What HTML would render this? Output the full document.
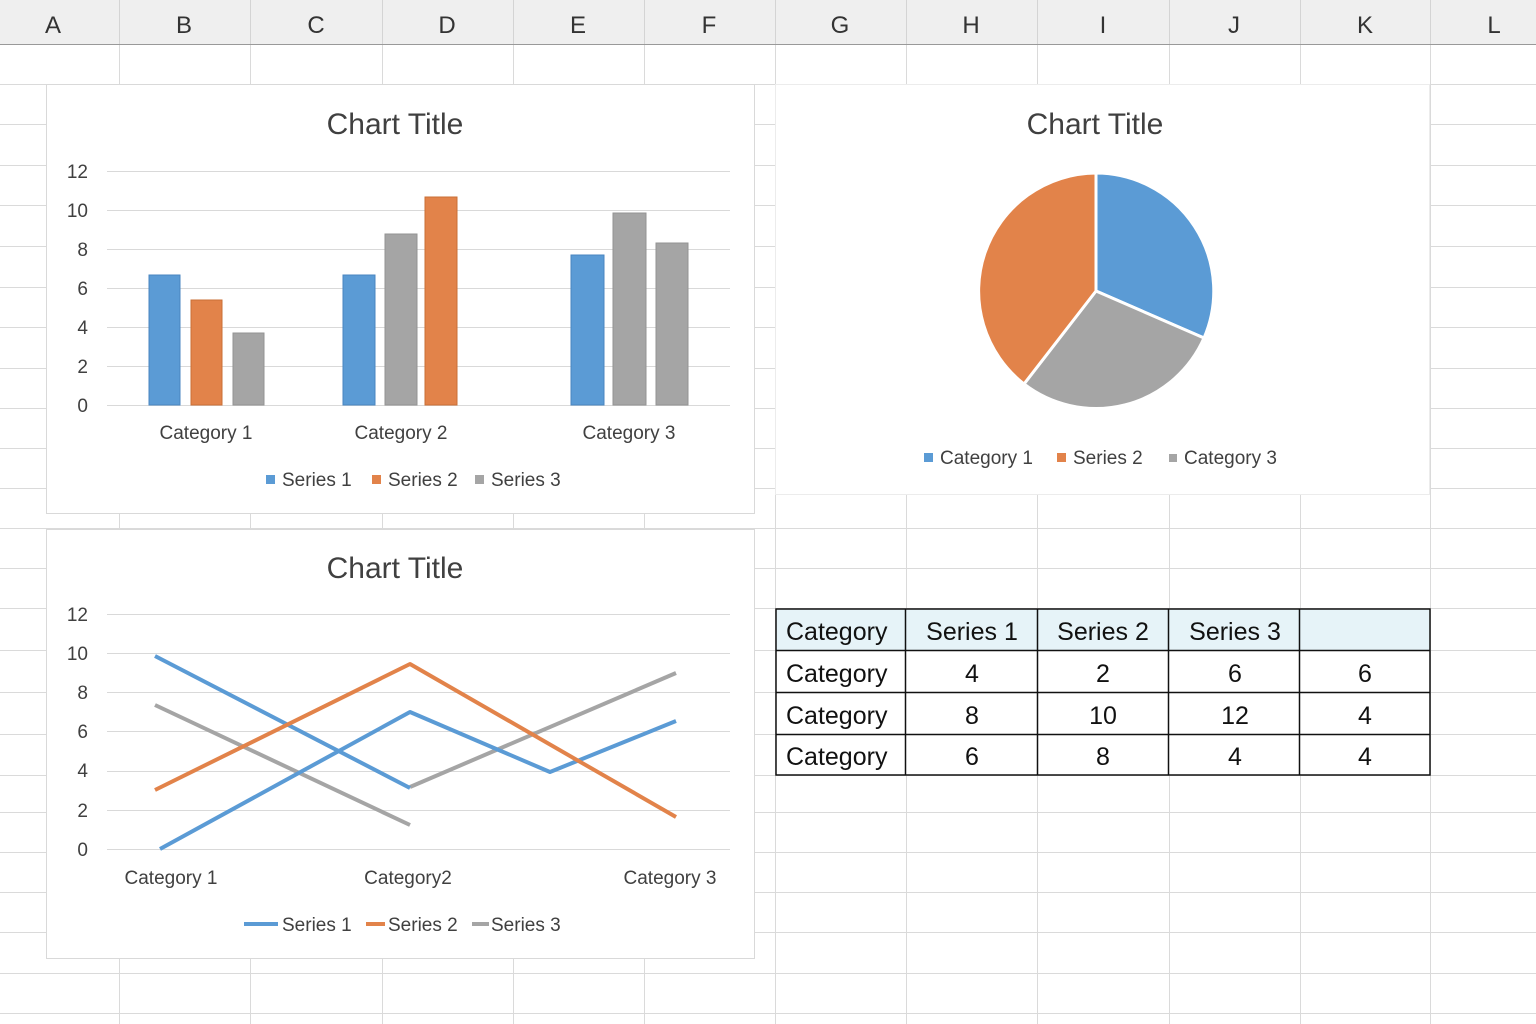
<!DOCTYPE html>
<html><head><meta charset="utf-8"><style>
html,body{margin:0;padding:0;background:#fff}
svg{display:block}
text{font-family:"Liberation Sans",sans-serif}
</style></head><body>
<svg width="1536" height="1024" viewBox="0 0 1536 1024" xmlns="http://www.w3.org/2000/svg">
<rect width="1536" height="1024" fill="#fff"/>
<g stroke="#dadada" stroke-width="1">
<line x1="0" y1="84.5" x2="1536" y2="84.5"/><line x1="0" y1="124.5" x2="1536" y2="124.5"/><line x1="0" y1="165.5" x2="1536" y2="165.5"/><line x1="0" y1="205.5" x2="1536" y2="205.5"/><line x1="0" y1="246.5" x2="1536" y2="246.5"/><line x1="0" y1="287.5" x2="1536" y2="287.5"/><line x1="0" y1="327.5" x2="1536" y2="327.5"/><line x1="0" y1="368.5" x2="1536" y2="368.5"/><line x1="0" y1="408.5" x2="1536" y2="408.5"/><line x1="0" y1="448.5" x2="1536" y2="448.5"/><line x1="0" y1="488.5" x2="1536" y2="488.5"/><line x1="0" y1="528.5" x2="1536" y2="528.5"/><line x1="0" y1="568.5" x2="1536" y2="568.5"/><line x1="0" y1="608.5" x2="1536" y2="608.5"/><line x1="0" y1="650.5" x2="1536" y2="650.5"/><line x1="0" y1="692.5" x2="1536" y2="692.5"/><line x1="0" y1="734.5" x2="1536" y2="734.5"/><line x1="0" y1="775.5" x2="1536" y2="775.5"/><line x1="0" y1="812.5" x2="1536" y2="812.5"/><line x1="0" y1="852.5" x2="1536" y2="852.5"/><line x1="0" y1="892.5" x2="1536" y2="892.5"/><line x1="0" y1="932.5" x2="1536" y2="932.5"/><line x1="0" y1="973.5" x2="1536" y2="973.5"/><line x1="0" y1="1013.5" x2="1536" y2="1013.5"/>
<line x1="119.5" y1="0" x2="119.5" y2="1024"/><line x1="250.5" y1="0" x2="250.5" y2="1024"/><line x1="382.5" y1="0" x2="382.5" y2="1024"/><line x1="513.5" y1="0" x2="513.5" y2="1024"/><line x1="644.5" y1="0" x2="644.5" y2="1024"/><line x1="775.5" y1="0" x2="775.5" y2="1024"/><line x1="906.5" y1="0" x2="906.5" y2="1024"/><line x1="1037.5" y1="0" x2="1037.5" y2="1024"/><line x1="1169.5" y1="0" x2="1169.5" y2="1024"/><line x1="1300.5" y1="0" x2="1300.5" y2="1024"/><line x1="1430.5" y1="0" x2="1430.5" y2="1024"/>
</g>
<rect x="0" y="0" width="1536" height="44" fill="#efefef"/>
<g stroke="#d4d4d4"><line x1="119.5" y1="0" x2="119.5" y2="44"/><line x1="250.5" y1="0" x2="250.5" y2="44"/><line x1="382.5" y1="0" x2="382.5" y2="44"/><line x1="513.5" y1="0" x2="513.5" y2="44"/><line x1="644.5" y1="0" x2="644.5" y2="44"/><line x1="775.5" y1="0" x2="775.5" y2="44"/><line x1="906.5" y1="0" x2="906.5" y2="44"/><line x1="1037.5" y1="0" x2="1037.5" y2="44"/><line x1="1169.5" y1="0" x2="1169.5" y2="44"/><line x1="1300.5" y1="0" x2="1300.5" y2="44"/><line x1="1430.5" y1="0" x2="1430.5" y2="44"/></g>
<line x1="0" y1="44.5" x2="1536" y2="44.5" stroke="#999"/>
<g font-size="24" fill="#333" text-anchor="middle">
<text x="53" y="33">A</text><text x="184" y="33">B</text><text x="316" y="33">C</text><text x="447" y="33">D</text><text x="578" y="33">E</text><text x="709" y="33">F</text><text x="840" y="33">G</text><text x="971" y="33">H</text><text x="1103" y="33">I</text><text x="1234" y="33">J</text><text x="1365" y="33">K</text><text x="1494" y="33">L</text>
</g>

<!-- Bar chart -->
<rect x="46.5" y="84.5" width="708" height="429" fill="#fff" stroke="#d9d9d9"/>
<text x="395" y="134" font-size="30" fill="#404040" text-anchor="middle">Chart Title</text>
<g stroke="#d9d9d9"><line x1="107" y1="171.5" x2="730" y2="171.5"/><line x1="107" y1="210.5" x2="730" y2="210.5"/><line x1="107" y1="249.5" x2="730" y2="249.5"/><line x1="107" y1="288.5" x2="730" y2="288.5"/><line x1="107" y1="327.5" x2="730" y2="327.5"/><line x1="107" y1="366.5" x2="730" y2="366.5"/><line x1="107" y1="405.5" x2="730" y2="405.5"/></g>
<g font-size="19" fill="#404040" text-anchor="end"><text x="88" y="178">12</text><text x="88" y="217">10</text><text x="88" y="256">8</text><text x="88" y="295">6</text><text x="88" y="334">4</text><text x="88" y="373">2</text><text x="88" y="412">0</text></g>
<g stroke-width="1">
<rect x="149" y="275" width="31" height="130" fill="#5b9bd5" stroke="#4a86c0"/>
<rect x="191" y="300" width="31" height="105" fill="#e2834a" stroke="#c96f36"/>
<rect x="233" y="333" width="31" height="72" fill="#a5a5a5" stroke="#939393"/>
<rect x="343" y="275" width="32" height="130" fill="#5b9bd5" stroke="#4a86c0"/>
<rect x="385" y="234" width="32" height="171" fill="#a5a5a5" stroke="#939393"/>
<rect x="425" y="197" width="32" height="208" fill="#e2834a" stroke="#c96f36"/>
<rect x="571" y="255" width="33" height="150" fill="#5b9bd5" stroke="#4a86c0"/>
<rect x="613" y="213" width="33" height="192" fill="#a5a5a5" stroke="#939393"/>
<rect x="656" y="243" width="32" height="162" fill="#a5a5a5" stroke="#939393"/>
</g>
<g font-size="19" fill="#404040" text-anchor="middle"><text x="206" y="439">Category 1</text><text x="401" y="439">Category 2</text><text x="629" y="439">Category 3</text></g>
<g font-size="19" fill="#404040">
<rect x="266" y="475" width="9" height="9" fill="#5b9bd5"/><text x="282" y="486">Series 1</text>
<rect x="372" y="475" width="9" height="9" fill="#e2834a"/><text x="388" y="486">Series 2</text>
<rect x="475" y="475" width="9" height="9" fill="#a5a5a5"/><text x="491" y="486">Series 3</text>
</g>

<!-- Pie chart -->
<rect x="775.5" y="84.5" width="654" height="410" fill="#fff" stroke="#ececec"/>
<text x="1095" y="134" font-size="30" fill="#404040" text-anchor="middle">Chart Title</text>
<g stroke="#fff" stroke-width="3" stroke-linejoin="round">
<path d="M1096,291 L1096,173 A118,118 0 0 1 1204,338 Z" fill="#5b9bd5"/>
<path d="M1096,291 L1204,338 A118,118 0 0 1 1024,384 Z" fill="#a5a5a5"/>
<path d="M1096,291 L1024,384 A118,118 0 0 1 1096,173 Z" fill="#e2834a"/>
</g>
<g font-size="19" fill="#404040">
<rect x="924" y="453" width="9" height="9" fill="#5b9bd5"/><text x="940" y="464">Category 1</text>
<rect x="1057" y="453" width="9" height="9" fill="#e2834a"/><text x="1073" y="464">Series 2</text>
<rect x="1169" y="454" width="8" height="8" fill="#a5a5a5"/><text x="1184" y="464">Category 3</text>
</g>

<!-- Line chart -->
<rect x="46.5" y="529.5" width="708" height="429" fill="#fff" stroke="#d9d9d9"/>
<text x="395" y="578" font-size="30" fill="#404040" text-anchor="middle">Chart Title</text>
<g stroke="#d9d9d9"><line x1="107" y1="614.5" x2="730" y2="614.5"/><line x1="107" y1="653.5" x2="730" y2="653.5"/><line x1="107" y1="692.5" x2="730" y2="692.5"/><line x1="107" y1="731.5" x2="730" y2="731.5"/><line x1="107" y1="771.5" x2="730" y2="771.5"/><line x1="107" y1="810.5" x2="730" y2="810.5"/><line x1="107" y1="849.5" x2="730" y2="849.5"/></g>
<g font-size="19" fill="#404040" text-anchor="end"><text x="88" y="621">12</text><text x="88" y="660">10</text><text x="88" y="699">8</text><text x="88" y="738">6</text><text x="88" y="777">4</text><text x="88" y="817">2</text><text x="88" y="856">0</text></g>
<g fill="none" stroke-width="4" stroke-linejoin="round">
<polyline points="155,705 410,825" stroke="#a5a5a5"/>
<polyline points="410,787 676,673" stroke="#a5a5a5"/>
<polyline points="155,656 410,788" stroke="#5b9bd5"/>
<polyline points="160,849 410,712 550,772 676,721" stroke="#5b9bd5"/>
<polyline points="155,790 410,664 676,817" stroke="#e2834a"/>
</g>
<g font-size="19" fill="#404040" text-anchor="middle"><text x="171" y="884">Category 1</text><text x="408" y="884">Category2</text><text x="670" y="884">Category 3</text></g>
<g font-size="19" fill="#404040">
<line x1="244" y1="924" x2="278" y2="924" stroke="#5b9bd5" stroke-width="4"/><text x="282" y="931">Series 1</text>
<line x1="366" y1="924" x2="385" y2="924" stroke="#e2834a" stroke-width="4"/><text x="388" y="931">Series 2</text>
<line x1="472" y1="924" x2="489" y2="924" stroke="#a5a5a5" stroke-width="4"/><text x="491" y="931">Series 3</text>
</g>

<!-- Table -->
<rect x="776" y="609" width="654" height="41" fill="#e6f3f8"/>
<rect x="776" y="650" width="654" height="125" fill="#fff"/>
<g stroke="#111" stroke-width="1.5" fill="none">
<rect x="776" y="609" width="654" height="166"/>
<line x1="776" y1="650.5" x2="1430" y2="650.5"/><line x1="776" y1="692.5" x2="1430" y2="692.5"/><line x1="776" y1="734.5" x2="1430" y2="734.5"/>
<line x1="905.5" y1="609" x2="905.5" y2="775"/><line x1="1037.5" y1="609" x2="1037.5" y2="775"/><line x1="1168.5" y1="609" x2="1168.5" y2="775"/><line x1="1299.5" y1="609" x2="1299.5" y2="775"/>
</g>
<g font-size="25" fill="#111">
<text x="786" y="640">Category</text><text x="786" y="682">Category</text><text x="786" y="724">Category</text><text x="786" y="765">Category</text>
</g>
<g font-size="25" fill="#111" text-anchor="middle">
<text x="972" y="640">Series 1</text><text x="1103" y="640">Series 2</text><text x="1235" y="640">Series 3</text>
<text x="972" y="682">4</text><text x="1103" y="682">2</text><text x="1235" y="682">6</text><text x="1365" y="682">6</text>
<text x="972" y="724">8</text><text x="1103" y="724">10</text><text x="1235" y="724">12</text><text x="1365" y="724">4</text>
<text x="972" y="765">6</text><text x="1103" y="765">8</text><text x="1235" y="765">4</text><text x="1365" y="765">4</text>
</g>
</svg>
</body></html>
